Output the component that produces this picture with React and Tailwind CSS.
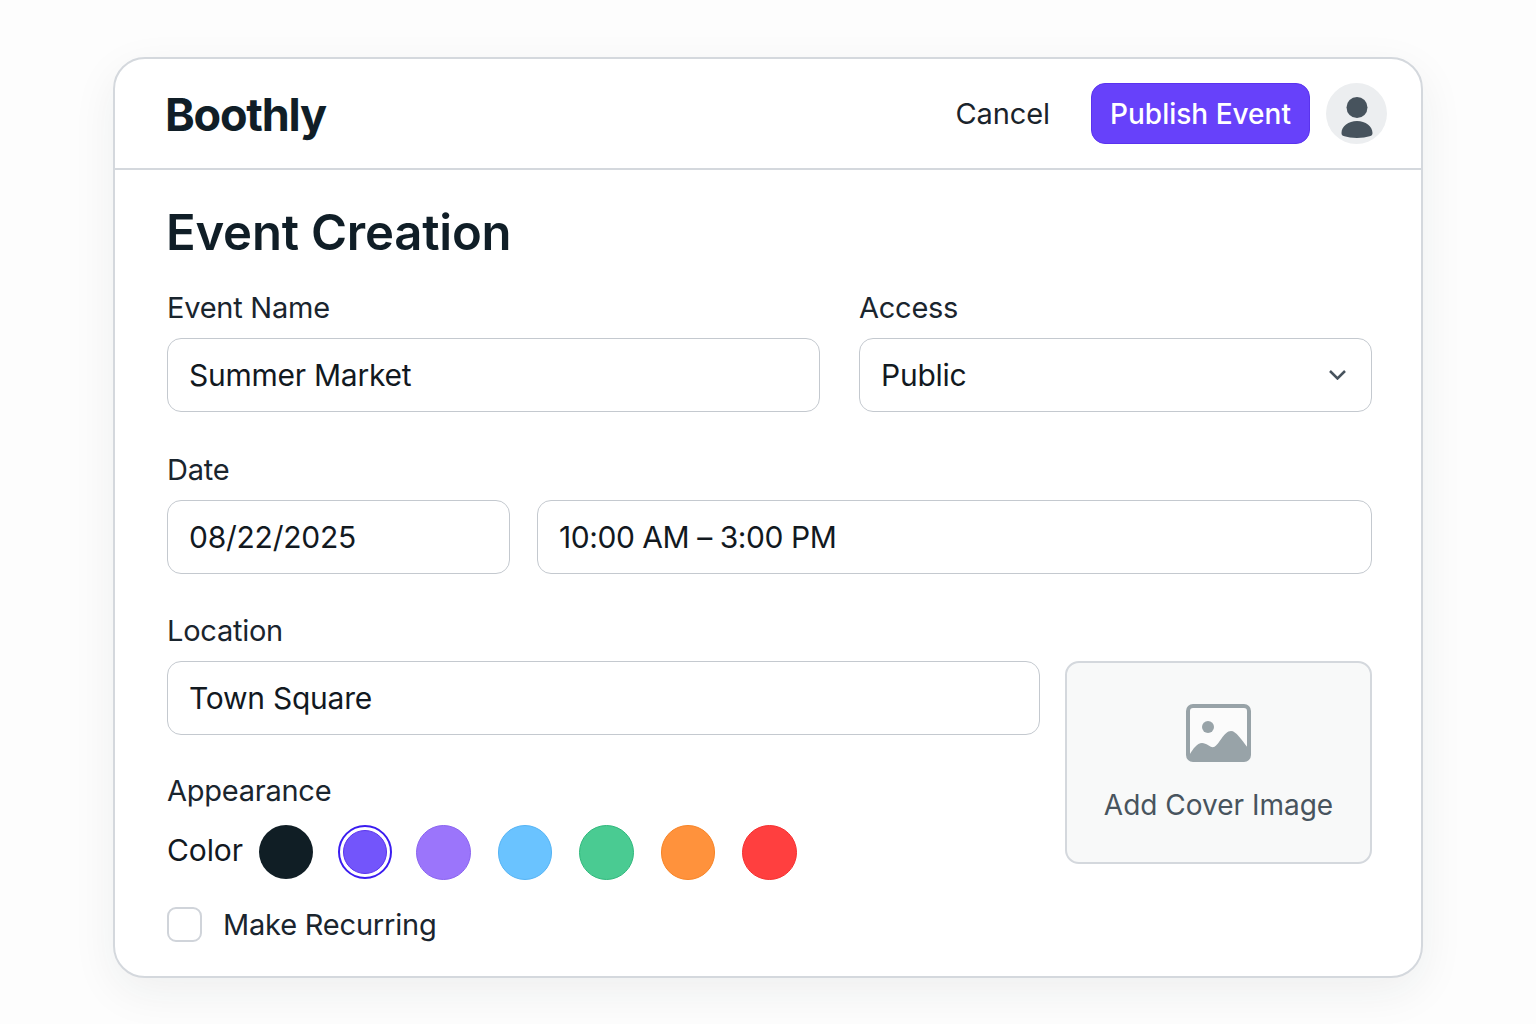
const font = { fontFamily: "Inter, 'Liberation Sans', sans-serif" };

const Label = ({ children }) => (
  <div className="h-[36px] text-[29px] leading-[36px] tracking-[-0.25px] text-[#1a252e]">{children}</div>
);

const Field = ({ children, className = "" }) => (
  <div className={`flex h-[74px] items-center rounded-[14px] border border-[#c4c9cf] bg-white pl-[21px] pr-[25px] text-[30px] tracking-[-0.25px] text-[#12191f] ${className}`}>
    {children}
  </div>
);

const swatches = [
  { bg: "bg-[#9b75fb]", border: "border-[#8a63f0]" },
  { bg: "bg-[#6ac3ff]", border: "border-[#55b4f5]" },
  { bg: "bg-[#4acb92]", border: "border-[#2fb87c]" },
  { bg: "bg-[#ff923c]", border: "border-[#f78426]" },
  { bg: "bg-[#ff3f3f]", border: "border-[#f52f2f]" },
];

const App = () => {
  return (
    <div className="min-h-screen bg-[#fdfdfd] pt-[57px]" style={font}>
      <div className="mx-auto h-[921px] w-[1310px] overflow-hidden rounded-[32px] border-2 border-[#d4d8dd] bg-white shadow-[0_14px_46px_rgba(30,40,50,0.065)]">

        {/* Header */}
        <div className="flex h-[111px] items-center border-b-2 border-[#d4d8dd] pl-[50px] pr-[34px]">
          <div className="mt-[2px] text-[45px] font-bold tracking-[-1.2px] text-[#101e27]">Boothly</div>
          <div className="ml-auto text-[29px] tracking-[-0.1px] text-[#1a232b]">Cancel</div>
          <button className="ml-[41px] h-[61px] w-[219px] rounded-[14px] border border-[#5a33ee] bg-[#6741fa] text-[28px] font-medium text-white">
            Publish Event
          </button>
          <div className="ml-[16px] flex h-[61px] w-[61px] items-center justify-center rounded-full bg-[#eceef0]">
            <svg className="mt-[8px]" width="32" height="42" viewBox="0 0 32 42">
              <circle cx="16" cy="10.5" r="10.500" fill="#47535d" />
              <path d="M0.500 36c0-7 7-12 15.500-12s15.500 5 15.500 12c0 1.500-0.600 2.600-2 3-8 2.500-19 2.500-27 0-1.400-0.400-2-1.500-2-3z" fill="#47535d" />
            </svg>
          </div>
        </div>

        {/* Form */}
        <div className="pl-[52px] pr-[49px]">
          <h1 className="-ml-px mt-[30px] h-[66px] text-[49px] font-semibold leading-[66px] tracking-[-0.2px] text-[#101e27]">Event Creation</h1>

          <div className="mt-[24px] flex gap-[39px]">
            <div className="w-[653px]">
              <Label>Event Name</Label>
              <Field className="mt-[12px]">Summer Market</Field>
            </div>
            <div className="flex-1">
              <Label>Access</Label>
              <Field className="mt-[12px] justify-between">
                Public
                <svg width="17" height="10" viewBox="0 0 17 10" fill="none" stroke="#47535d" strokeWidth="2.500">
                  <path d="M1 1l7.500 7.500L16 1" />
                </svg>
              </Field>
            </div>
          </div>

          <div className="mt-[40px]">
            <Label>Date</Label>
            <div className="mt-[12px] flex gap-[27px]">
              <Field className="w-[343px]">08/22/2025</Field>
              <Field className="flex-1 tracking-[-0.45px]">10:00 AM – 3:00 PM</Field>
            </div>
          </div>

          <div className="mt-[24px] flex gap-[25px]">
            <div className="w-[873px]">
              <div className="mt-[15px]">
                <Label>Location</Label>
                <Field className="mt-[12px]">Town Square</Field>
              </div>

              <div className="mt-[38px]">
                <Label>Appearance</Label>
                <div className="mt-[16px] flex items-center">
                  <span className="mb-[3px] w-[92px] text-[30px] tracking-[-0.1px] text-[#12191f]">Color</span>
                  <div className="h-[54px] w-[54px] rounded-full bg-[#101e25]" />
                  <div className="ml-[25px] flex h-[54px] w-[54px] items-center justify-center rounded-full border-2 border-[#3a1cf0] bg-white">
                    <div className="h-[44px] w-[44px] rounded-full border border-[#5a33ee] bg-[#7355fb]" />
                  </div>
                  {swatches.map((s, i) => (
                    <div key={s.bg} className={`h-[54.5px] w-[54.5px] rounded-full border ${i === 0 ? "ml-[24px]" : "ml-[27px]"} ${s.bg} ${s.border}`} />
                  ))}
                </div>
              </div>

              <div className="mt-[23px] flex items-center gap-[21px]">
                <div className="h-[35px] w-[35px] rounded-[9px] border-2 border-[#d0d4da] bg-white" />
                <span className="text-[29px] tracking-[-0.2px] text-[#1a252e]">Make Recurring</span>
              </div>
            </div>

            {/* Cover image */}
            <div className="mt-[63px] flex h-[203px] flex-1 flex-col items-center rounded-[14px] border-2 border-[#d4d8dd] bg-[#f8f9f9]">
              <svg className="mt-[41px]" width="65" height="58" viewBox="0 0 65 58">
                <rect x="2" y="2" width="61" height="54" rx="5" fill="#fbfbfb" stroke="#98a3a8" strokeWidth="4" />
                <circle cx="22" cy="23" r="6" fill="#98a3a8" />
                <path d="M4 50c3-5 7-11 12-11 5 0 8 5 12 4 5-2 10-16 17-16 5 0 10 8 17 17v11H4z" fill="#98a3a8" />
              </svg>
              <div className="mt-[25px] text-[28px] leading-[36px] text-[#48545e]">Add Cover Image</div>
            </div>
          </div>
        </div>
      </div>
    </div>
  );
};

export default App;
